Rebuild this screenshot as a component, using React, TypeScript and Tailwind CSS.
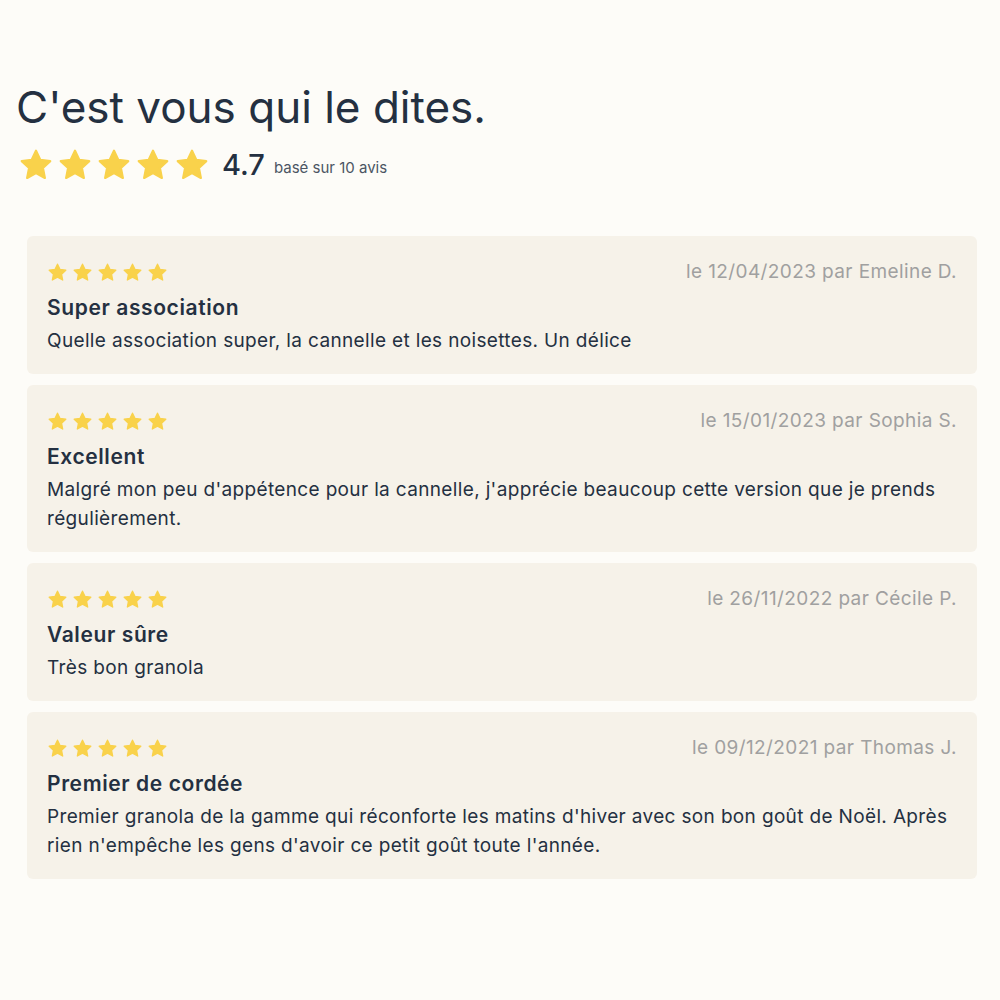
const reviews = [
  {
    date: '12/04/2023',
    author: 'Emeline D.',
    title: 'Super association',
    text: 'Quelle association super, la cannelle et les noisettes. Un délice',
  },
  {
    date: '15/01/2023',
    author: 'Sophia S.',
    title: 'Excellent',
    text: "Malgré mon peu d'appétence pour la cannelle, j'apprécie beaucoup cette version que je prends régulièrement.",
  },
  {
    date: '26/11/2022',
    author: 'Cécile P.',
    title: 'Valeur sûre',
    text: 'Très bon granola',
  },
  {
    date: '09/12/2021',
    author: 'Thomas J.',
    title: 'Premier de cordée',
    text: "Premier granola de la gamme qui réconforte les matins d'hiver avec son bon goût de Noël. Après rien n'empêche les gens d'avoir ce petit goût toute l'année.",
  },
];

// Rounded star, same shape for header and cards
const Star = ({ className }: { className: string }) => (
  <svg className={className} viewBox="0 0 24 24" fill="#f9d24b" stroke="#f9d24b" strokeWidth={1.5} strokeLinejoin="round">
    <path d="M12 2.5l2.9 6.1 6.6.8-4.9 4.6 1.3 6.6L12 17.3l-5.9 3.3 1.3-6.6-4.9-4.6 6.6-.8z" />
  </svg>
);

const Stars = ({ size, gap }: { size: string; gap: string }) => (
  <div className={`flex items-center ${gap}`}>
    {[0, 1, 2, 3, 4].map((i) => (
      <Star key={i} className={size} />
    ))}
  </div>
);

const App = () => {
  return (
    <div className="min-h-screen bg-[#fdfcf8] text-[#243041] font-['Inter',sans-serif] pt-[79px]">
      {/* Header */}
      <div className="px-4">
        <h1 className="text-[44px] leading-[56px] font-normal">C'est vous qui le dites.</h1>
        <div className="flex items-center mt-[10px] pl-[2px]">
          <Stars size="w-[36px] h-[36px]" gap="gap-[3px]" />
          <span className="ml-[12px] text-[29px] leading-[40px] font-medium">4.7</span>
          <span className="ml-[9px] mt-[6px] text-[15px] text-[#4b5563]">basé sur 10 avis</span>
        </div>
      </div>

      {/* Reviews */}
      <div className="flex flex-col gap-[11px] mt-[51px] pl-[27px] pr-[23px]">
        {reviews.map((r) => (
          <div key={r.title} className="bg-[#f6f2e9] rounded-md px-5 pt-[21px] pb-[19px]">
            <div className="flex items-center justify-between h-[30px]">
              <Stars size="w-[21px] h-[21px]" gap="gap-[4px]" />
              <span className="text-[19px] tracking-[0.4px] text-[#a0a0a0]">
                le {r.date} par {r.author}
              </span>
            </div>
            <h3 className="mt-[6px] text-[21px] leading-[30px] font-semibold tracking-[0.6px]">{r.title}</h3>
            <p className="mt-[3px] text-[19px] leading-[29px] tracking-[0.35px]">{r.text}</p>
          </div>
        ))}
      </div>
    </div>
  );
};

export default App;
